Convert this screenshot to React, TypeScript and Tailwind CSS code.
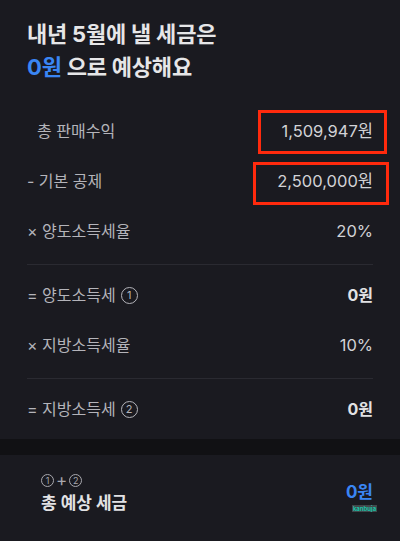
import React from "react";

const font = { fontFamily: 'Inter, "Noto Sans CJK KR", "Noto Sans", sans-serif' };

function Circ({ n, big }: { n: string; big?: boolean }) {
  return big ? (
    <span className="inline-flex h-[17px] w-[17px] items-center justify-center rounded-full border-[1.5px] border-[#b4b4ba] text-[11px] leading-none align-[-2px]">
      {n}
    </span>
  ) : (
    <span className="inline-flex h-[13px] w-[13px] items-center justify-center rounded-full border border-[#a8a8ae] text-[9px] leading-none">
      {n}
    </span>
  );
}

function Row({ label, value, bold, indent, box }: { label: React.ReactNode; value: string; bold?: boolean; indent?: boolean; box?: "a" | "b" }) {
  return (
    <div className="relative flex h-[50px] items-center justify-between">
      <span className={`flex items-center text-[16px] text-[#b4b4ba] ${indent ? "pl-[10px]" : ""}`}>{label}</span>
      <span className={`${bold ? "text-[16px] font-bold text-[#e2e2e4]" : "text-[16.5px] text-[#d2d2d6]"}`}>{value}</span>
      {box === "a" && <div className="absolute left-[231px] -right-[14px] top-[4px] bottom-[2px] border-[3px] border-[#ff2a0d]" />}
      {box === "b" && <div className="absolute left-[226px] -right-[16px] top-[6px] bottom-[1px] border-[3px] border-[#ff2a0d]" />}
    </div>
  );
}

export default function App() {
  return (
    <div style={font} className="w-[400px] h-[541px] bg-[#1a1a20] overflow-hidden">
      <div className="px-[27px] pt-[18px]">
        <div className="text-[22px] font-bold leading-[33px] text-[#e6e6e8] tracking-[-0.2px]">
          <div>내년 5월에 낼 세금은</div>
          <div>
            <span className="text-[#3a86f4]">0원</span> 으로 예상해요
          </div>
        </div>
      </div>
      <div className="px-[27px] pt-[22px]">
        <Row label="총 판매수익" value="1,509,947원" indent box="a" />
        <Row label="- 기본 공제" value="2,500,000원" box="b" />
        <Row label="× 양도소득세율" value="20%" />
        <div className="mt-[8px] h-px bg-[#2a2a31]" />
        <div className="mt-[5px]" />
        <Row label={<>= 양도소득세<span className="ml-[5px] inline-flex"><Circ n="1" big /></span></>} value="0원" bold />
        <Row label="× 지방소득세율" value="10%" />
        <div className="mt-[8px] h-px bg-[#2a2a31]" />
        <div className="mt-[5px]" />
        <Row label={<>= 지방소득세<span className="ml-[5px] inline-flex"><Circ n="2" big /></span></>} value="0원" bold />
      </div>
      <div className="mt-[5px] h-[16px] bg-[#111114]" />
      <div className="flex items-center justify-between pl-[41px] pr-[27px] pt-[15px]">
        <div>
          <div className="flex h-[20px] items-center gap-[2px] text-[#a8a8ae]">
            <Circ n="1" />
            <span className="text-[17px] leading-none">+</span>
            <Circ n="2" />
          </div>
          <div className="text-[17px] font-bold leading-[26px] text-[#e2e2e4]">총 예상 세금</div>
        </div>
        <div className="relative -mt-[2px] text-[17px] leading-[22px] font-bold text-[#3a86f4]">
          0원
          <span className="absolute left-[6px] top-[24px] text-[6px] leading-[7px] font-bold text-[#17c3a6] bg-[#e8fffa]/20 px-[1px]">kanbuja</span>
        </div>
      </div>
    </div>
  );
}
